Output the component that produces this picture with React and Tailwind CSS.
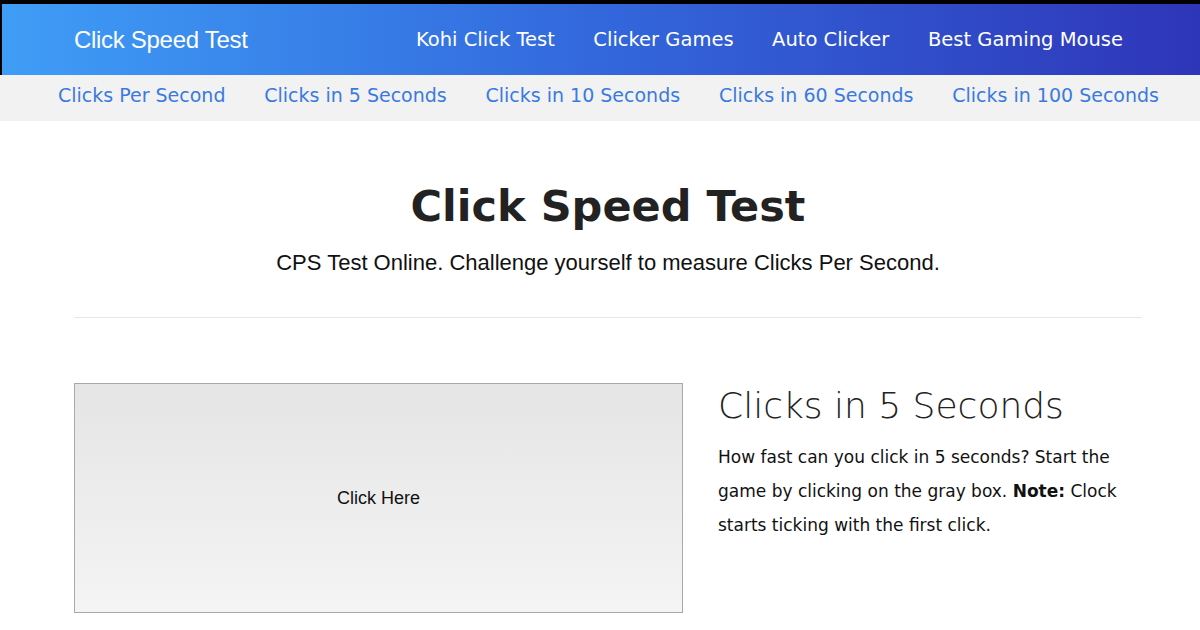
import React from "react";

const topLinks = ["Kohi Click Test", "Clicker Games", "Auto Clicker", "Best Gaming Mouse"];
const subLinks = [
  "Clicks Per Second",
  "Clicks in 5 Seconds",
  "Clicks in 10 Seconds",
  "Clicks in 60 Seconds",
  "Clicks in 100 Seconds",
];

const geo = { fontFamily: '"DejaVu Sans", "Noto Sans", sans-serif' };

const App = () => {
  return (
    <div className="w-[1200px] h-[630px] overflow-hidden bg-white">
      <div className="bg-black pt-[4px] pl-[2px]">
        <div className="h-[71px] flex items-center bg-gradient-to-r from-[#3f9df6] via-[#3367dc] to-[#2e35b8] pl-[72px] pr-[77px]">
          <a className="text-white text-[24px] tracking-[-0.3px] font-['Liberation_Sans',Arial,sans-serif]">
            Click Speed Test
          </a>
          <nav className="ml-auto w-[707px] flex justify-between text-white text-[19.5px]" style={geo}>
            {topLinks.map((l) => (
              <a key={l}>{l}</a>
            ))}
          </nav>
        </div>
      </div>
      <div className="h-[46px] bg-[#f2f2f2] flex items-center justify-between pl-[58px] pr-[41px] pb-[6px] text-[#3a7ae0] text-[19px]" style={geo}>
        {subLinks.map((l) => (
          <a key={l}>{l}</a>
        ))}
      </div>

      <main className="ml-[74px] w-[1068px]">
        <div className="text-center pt-[55px]">
          <h1 className="text-[43px] font-bold text-[#222222] leading-[60px]" style={geo}>
            Click Speed Test
          </h1>
          <p className="mt-[13px] text-[22px] text-[#111] leading-[28px] font-['Liberation_Sans',Arial,sans-serif]">
            CPS Test Online. Challenge yourself to measure Clicks Per Second.
          </p>
        </div>
        <hr className="mt-[40px] border-t border-[#e6e6e6]" />

        <div className="mt-[65px] flex">
          <button className="w-[609px] h-[230px] shrink-0 border border-[#a9a9a9] bg-gradient-to-b from-[#e5e5e5] to-[#f4f4f4] text-[18px] text-[#111] font-['Liberation_Sans',Arial,sans-serif]">
            Click Here
          </button>
          <div className="ml-[35px]">
            <h2 className="text-[36px] font-extralight text-[#222] leading-[44px] mt-[1px]" style={geo}>
              Clicks in 5 Seconds
            </h2>
            <p className="mt-[12px] text-[17px] leading-[34px] text-[#111] w-[402px]" style={geo}>
              How fast can you click in 5 seconds? Start the game by clicking on the gray box. <b>Note:</b> Clock starts ticking with the first click.
            </p>
          </div>
        </div>
      </main>
    </div>
  );
};

export default App;
